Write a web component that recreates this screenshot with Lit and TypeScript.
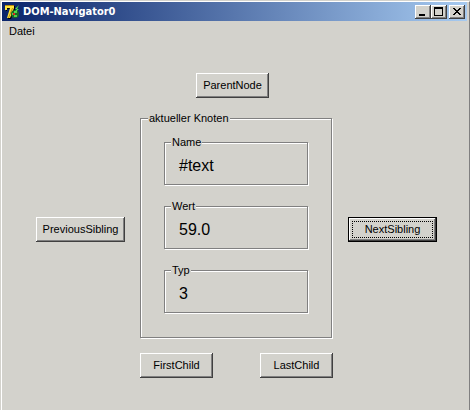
import { LitElement, html, css } from "lit";
import { customElement, property } from "lit/decorators.js";

const groove = css`
  fieldset {
    margin: 0;
    min-width: 0;
    box-sizing: border-box;
    border: 1px solid #808080;
    box-shadow: 1px 1px 0 #fff, inset 1px 1px 0 #fff;
  }
  legend {
    padding: 0 1px;
    line-height: 14px;
    background: #d3d2cc;
  }
`;

@customElement("value-box")
class ValueBox extends LitElement {
  @property() caption = "";
  @property() value = "";

  static styles = [
    groove,
    css`
      :host { display: block; }
      fieldset { height: 50px; padding: 7px 14px 0; }
      legend { margin-left: -8px; }
      output { display: block; font-size: 16px; line-height: 20px; }
    `,
  ];

  render() {
    return html`
      <fieldset>
        <legend>${this.caption}</legend>
        <output>${this.value}</output>
      </fieldset>
    `;
  }
}

@customElement("app-root")
class AppRoot extends LitElement {
  static styles = [
    groove,
    css`
      :host {
        display: flex;
        min-height: 100vh;
        box-sizing: border-box;
        padding: 1px 0 0 1px;
        background: #d3d2cc;
        color: #000;
        font: 11px/14px "Liberation Sans", Arial, sans-serif;
      }
      button {
        font: inherit;
        color: inherit;
        margin: 0;
        padding: 0;
        border: 0;
        border-radius: 0;
        background: #d3d2cc;
      }
      .window {
        flex: 1;
        border: 1px solid #fff;
        border-right-color: #808080;
        border-bottom: 0;
      }
      .titlebar {
        display: flex;
        align-items: center;
        height: 19px;
        margin-right: 2px;
        padding: 0 2px;
        box-sizing: border-box;
        background: linear-gradient(to right, #0a246a, #a6caf0);
      }
      .logo { width: 16px; height: 16px; flex: none; }
      h1 {
        flex: 1;
        margin: 0 0 0 3px;
        color: #fff;
        font: bold 11px/14px "DejaVu Sans Condensed", "DejaVu Sans", sans-serif;
        white-space: nowrap;
      }
      .caption {
        width: 16px;
        height: 14px;
        box-shadow: inset -1px -1px #404040, inset 1px 1px #fff, inset -2px -2px #808080;
      }
      .caption svg { display: block; width: 16px; height: 14px; }
      .close { margin-left: 2px; }
      .menu {
        display: flex;
        height: 20px;
        padding-left: 7px;
      }
      .content {
        display: grid;
        grid-template-columns: 89px 193px 89px;
        column-gap: 15px;
        justify-content: center;
        align-items: center;
        justify-items: center;
        padding: 32px 0 32px 2px;
      }
      .push {
        width: 73px;
        height: 25px;
        padding-bottom: 2px;
        box-shadow: inset -1px -1px #404040, inset 1px 1px #fff, inset -2px -2px #808080;
      }
      .wide { width: 89px; margin-top: 10px; }
      .default {
        border: 1px solid #000;
        outline: 1px dotted #000;
        outline-offset: -5px;
      }
      .parent { grid-column: 2; margin: 0 8px 13px 0; }
      .previous { grid-column: 1; }
      .node {
        grid-column: 2;
        justify-self: start;
        width: 192px;
        height: 227px;
        padding: 10px 23px 0;
      }
      .node > legend { margin-left: -16px; }
      .values { display: grid; gap: 14px; }
      .children {
        grid-column: 2;
        justify-self: stretch;
        display: flex;
        justify-content: space-between;
        margin-top: 15px;
      }
    `,
  ];

  render() {
    return html`
      <div class="window">
        <header class="titlebar">
          <svg class="logo" viewBox="0 0 16 16" aria-hidden="true">
            <path d="M2 2h9v3l-4 10H4L7 5H3v2H2z" fill="#000" />
            <path d="M1 1h9v3L6 14H3L6 4H3v2H1z" fill="#ffe53b" />
            <path d="M1 1h9v1H1zM8 4h1L5 14H4z" fill="#b98a12" />
            <circle cx="11" cy="10" r="4" fill="#176b24" />
            <path d="M10 7h3v2h-2v2h2v2h-3v-2H8V9h2z" fill="#55c94e" />
            <path d="M15 1l-4 4h2l-4 5 6-5h-2z" fill="#4df04a" />
            <path d="M9 9h2v2H9z" fill="#e02020" />
          </svg>
          <h1>DOM-Navigator0</h1>
          <button class="caption" aria-label="Minimieren">
            <svg viewBox="0 0 16 14"><path d="M4 9h6v2H4z" /></svg>
          </button>
          <button class="caption" aria-label="Maximieren">
            <svg viewBox="0 0 16 14">
              <path d="M3 2h9v9H3zM4 4v6h7V4z" fill-rule="evenodd" />
            </svg>
          </button>
          <button class="caption close" aria-label="Schließen">
            <svg viewBox="0 0 16 14" shape-rendering="crispEdges">
              <path d="M4 3h2v1h1v1h2V4h1V3h2v1h-1v1h-1v1H9v1h1v1h1v1h1v1h-2V9H9V8H7v1H6v1H4V9h1V8h1V7h1V6H6V5H5V4H4z" />
            </svg>
          </button>
        </header>
        <nav class="menu"><button>Datei</button></nav>
        <main class="content">
          <button class="push parent">ParentNode</button>
          <button class="push wide previous">PreviousSibling</button>
          <fieldset class="node">
            <legend>aktueller Knoten</legend>
            <div class="values">
              <value-box caption="Name" value="#text"></value-box>
              <value-box caption="Wert" value="59.0"></value-box>
              <value-box caption="Typ" value="3"></value-box>
            </div>
          </fieldset>
          <button class="push wide default">NextSibling</button>
          <div class="children">
            <button class="push">FirstChild</button>
            <button class="push">LastChild</button>
          </div>
        </main>
      </div>
    `;
  }
}
